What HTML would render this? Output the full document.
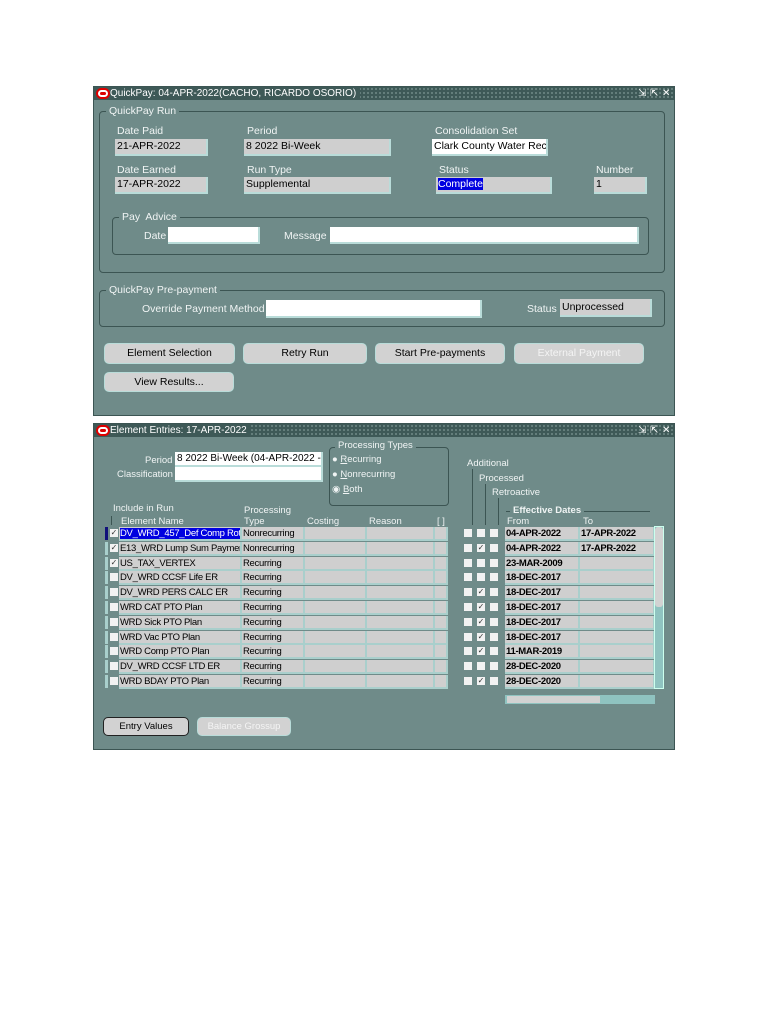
<!DOCTYPE html>
<html><head><meta charset="utf-8"><style>
*{margin:0;padding:0;box-sizing:border-box}
body{width:768px;height:1024px;background:#fff;position:relative;font-family:"Liberation Sans",Arial,sans-serif;overflow:hidden}
.a{position:absolute}
.win{position:absolute;background:#6f8b89;border:1px solid #3c5553}
.tb{position:absolute;left:0;right:0;top:0;height:13px;background:#3e5957;background-image:radial-gradient(#7d9794 0.7px,transparent 1px);background-size:4px 4px;color:#fff;font-size:10px;line-height:13px}
.tb span{background:#3e5957;padding:0 4px 0 2px}
.ol{display:inline-block;width:10px;height:7px;border:2px solid #fff;border-radius:4px;background:#d00;vertical-align:-1px;margin:0 2px 0 2px;box-shadow:0 0 0 2px #d00}
.lbl{position:absolute;font-size:10.5px;color:#f0f4f4;white-space:nowrap}
.f{position:absolute;background:#cfcfcf;border-right:2px solid #b9dcd9;border-bottom:2px solid #b9dcd9;font-size:10.5px;line-height:13px;padding-left:2px;padding-top:1px;white-space:nowrap;overflow:hidden;color:#000}
.w{background:#fff}
.grp{position:absolute;border:1px solid #3c5553;border-radius:4px}
.gl{position:absolute;background:#6f8b89;color:#f0f4f4;font-size:10.5px;padding:0 3px;white-space:nowrap}
.btn{position:absolute;background:#d2d2d2;border:1px solid #b9dcd9;border-radius:5px;font-size:10.5px;text-align:center;line-height:18px;color:#000}
.dis{color:#f4f4f4}
.cb{position:absolute;width:8px;height:8px;background:#f2f2f2;font-size:8px;line-height:8px;text-align:center;color:#333}
.tc{position:absolute;background:#cfcfcf;border-right:2px solid #a9cfcc;border-bottom:2px solid #a9cfcc;font-size:9.5px;line-height:13px;padding-left:1px;white-space:nowrap;overflow:hidden;letter-spacing:-0.3px}
.b{font-weight:bold}
.ic{position:absolute;color:#fff;font-size:10px;line-height:13px;top:0}
</style></head><body>

<div class="win" style="left:93px;top:86px;width:582px;height:330px">
 <div class="tb"><span><i class="ol"></i>QuickPay: 04-APR-2022(CACHO, RICARDO OSORIO)</span></div>
 <div class="ic" style="left:544px">⇲</div><div class="ic" style="left:556px">⇱</div><div class="ic" style="left:568px">✕</div>
 <div class="grp" style="left:5px;top:24px;width:566px;height:162px"></div>
 <div class="gl" style="left:12px;top:18px">QuickPay Run</div>
 <div class="lbl" style="left:23px;top:38px">Date Paid</div>
 <div class="f" style="left:21px;top:52px;width:93px;height:17px">21-APR-2022</div>
 <div class="lbl" style="left:153px;top:38px">Period</div>
 <div class="f" style="left:150px;top:52px;width:147px;height:17px">8 2022 Bi-Week</div>
 <div class="lbl" style="left:341px;top:38px">Consolidation Set</div>
 <div class="f w" style="left:338px;top:52px;width:116px;height:17px">Clark County Water Rec</div>
 <div class="lbl" style="left:23px;top:77px">Date Earned</div>
 <div class="f" style="left:21px;top:90px;width:93px;height:17px">17-APR-2022</div>
 <div class="lbl" style="left:153px;top:77px">Run Type</div>
 <div class="f" style="left:150px;top:90px;width:147px;height:17px">Supplemental</div>
 <div class="lbl" style="left:345px;top:77px">Status</div>
 <div class="f" style="left:342px;top:90px;width:116px;height:17px"><span style="background:#0000e0;color:#fff">Complete</span></div>
 <div class="lbl" style="left:502px;top:77px">Number</div>
 <div class="f" style="left:500px;top:90px;width:53px;height:17px">1</div>
 <div class="grp" style="left:18px;top:130px;width:537px;height:38px"></div>
 <div class="gl" style="left:25px;top:124px">Pay&nbsp; Advice</div>
 <div class="lbl" style="left:50px;top:143px">Date</div>
 <div class="f w" style="left:74px;top:140px;width:92px;height:17px">&nbsp;</div>
 <div class="lbl" style="left:190px;top:143px">Message</div>
 <div class="f w" style="left:236px;top:140px;width:309px;height:17px">&nbsp;</div>
 <div class="grp" style="left:5px;top:203px;width:566px;height:37px"></div>
 <div class="gl" style="left:12px;top:197px">QuickPay Pre-payment</div>
 <div class="lbl" style="left:48px;top:216px">Override Payment Method</div>
 <div class="f w" style="left:172px;top:213px;width:216px;height:18px">&nbsp;</div>
 <div class="lbl" style="left:433px;top:216px">Status</div>
 <div class="f" style="left:466px;top:212px;width:92px;height:18px;line-height:15px">Unprocessed</div>
 <div class="btn" style="left:10px;top:256px;width:131px;height:21px">Element Selection</div>
 <div class="btn" style="left:149px;top:256px;width:124px;height:21px">Retry Run</div>
 <div class="btn" style="left:281px;top:256px;width:130px;height:21px">Start Pre-payments</div>
 <div class="btn dis" style="left:420px;top:256px;width:130px;height:21px">External Payment</div>
 <div class="btn" style="left:10px;top:285px;width:130px;height:20px">View Results...</div>
</div>

<div class="win" style="left:93px;top:423px;width:582px;height:327px">
 <div class="tb"><span><i class="ol"></i>Element Entries: 17-APR-2022</span></div>
 <div class="ic" style="left:544px">⇲</div><div class="ic" style="left:556px">⇱</div><div class="ic" style="left:568px">✕</div>
 <div class="lbl" style="left:51px;top:31px;font-size:9.5px">Period</div>
 <div class="f w" style="left:81px;top:28px;width:148px;height:15px;font-size:10px;padding-top:0">8 2022 Bi-Week (04-APR-2022 - 17-APR</div>
 <div class="lbl" style="left:23px;top:45px;font-size:9.5px">Classification</div>
 <div class="f w" style="left:81px;top:43px;width:148px;height:15px">&nbsp;</div>
 <div class="grp" style="left:235px;top:23px;width:120px;height:59px"></div>
 <div class="gl" style="left:241px;top:16px;font-size:9.5px">Processing Types</div>
 <div class="lbl" style="left:238px;top:30px;font-size:9.5px">● <u>R</u>ecurring</div>
 <div class="lbl" style="left:238px;top:45px;font-size:9.5px">● <u>N</u>onrecurring</div>
 <div class="lbl" style="left:238px;top:60px;font-size:9.5px">◉ <u>B</u>oth</div>
 <div class="lbl" style="left:19px;top:79px;font-size:9.5px">Include in Run</div>
 <div class="a" style="left:17px;top:92px;width:1px;height:9px;background:#3c5553"></div>
 <div class="lbl" style="left:150px;top:81px;font-size:9.5px">Processing</div>
 <div class="lbl" style="left:27px;top:92px;font-size:9.5px">Element Name</div>
 <div class="lbl" style="left:150px;top:92px;font-size:9.5px">Type</div>
 <div class="lbl" style="left:213px;top:92px;font-size:9.5px">Costing</div>
 <div class="lbl" style="left:275px;top:92px;font-size:9.5px">Reason</div>
 <div class="lbl" style="left:343px;top:92px;font-size:9.5px">[ ]</div>
 <div class="lbl" style="left:373px;top:34px;font-size:9.5px">Additional</div>
 <div class="lbl" style="left:385px;top:49px;font-size:9.5px">Processed</div>
 <div class="lbl" style="left:398px;top:63px;font-size:9.5px">Retroactive</div>
 <div class="a" style="left:378px;top:45px;width:1px;height:56px;background:#3c5553"></div>
 <div class="a" style="left:391px;top:60px;width:1px;height:41px;background:#3c5553"></div>
 <div class="a" style="left:404px;top:74px;width:1px;height:27px;background:#3c5553"></div>
 <div class="a" style="left:412px;top:87px;width:144px;height:1px;background:#3c5553"></div>
 <div class="gl b" style="left:416px;top:81px;font-size:9.5px">Effective Dates</div>
 <div class="lbl" style="left:413px;top:92px;font-size:9.5px">From</div>
 <div class="lbl" style="left:489px;top:92px;font-size:9.5px">To</div>
 <div id="rows"></div>
 <div class="a" style="left:560px;top:102px;width:10px;height:163px;background:#8fc3c0;border:1px solid #cfe;"></div>
 <div class="a" style="left:561px;top:103px;width:8px;height:80px;background:#d2d2d2;border-radius:3px"></div>
 <div class="a" style="left:411px;top:271px;width:150px;height:9px;background:#8fc3c0"></div>
 <div class="a" style="left:413px;top:272px;width:93px;height:7px;background:#d2d2d2"></div>
 <div class="btn" style="left:9px;top:293px;width:86px;height:19px;border:1px solid #222;line-height:17px;font-size:9.5px">Entry Values</div>
 <div class="btn dis" style="left:103px;top:293px;width:94px;height:19px;line-height:17px;font-size:9.5px">Balance Grossup</div>
</div>
<script>
var d=[["DV_WRD_457_Def Comp Roth","Nonrecurring",1,0,"04-APR-2022","17-APR-2022"],
["E13_WRD Lump Sum Payment","Nonrecurring",1,1,"04-APR-2022","17-APR-2022"],
["US_TAX_VERTEX","Recurring",1,0,"23-MAR-2009",""],
["DV_WRD CCSF Life ER","Recurring",0,0,"18-DEC-2017",""],
["DV_WRD PERS CALC ER","Recurring",0,1,"18-DEC-2017",""],
["WRD CAT PTO Plan","Recurring",0,1,"18-DEC-2017",""],
["WRD Sick PTO Plan","Recurring",0,1,"18-DEC-2017",""],
["WRD Vac PTO Plan","Recurring",0,1,"18-DEC-2017",""],
["WRD Comp PTO Plan","Recurring",0,1,"11-MAR-2019",""],
["DV_WRD CCSF LTD ER","Recurring",0,0,"28-DEC-2020",""],
["WRD BDAY PTO  Plan","Recurring",0,1,"28-DEC-2020",""]];
var h="";d.forEach(function(r,i){var t=103+i*14.8;
h+='<div class="a" style="left:11px;top:'+t+'px;width:3px;height:13px;background:'+(i==0?'#10107a':'#a9cfcc')+'"></div>';
h+='<div class="cb" style="left:16px;top:'+(t+2)+'px">'+(r[2]?'✓':'')+'</div>';
h+='<div class="tc" style="left:25px;top:'+t+'px;width:123px;height:14px">'+(i==0?'<span style="background:#0000e0;color:#fff">'+r[0]+'</span>':r[0])+'</div>';
h+='<div class="tc" style="left:148px;top:'+t+'px;width:63px;height:14px">'+r[1]+'</div>';
h+='<div class="tc" style="left:211px;top:'+t+'px;width:62px;height:14px"></div>';
h+='<div class="tc" style="left:273px;top:'+t+'px;width:68px;height:14px"></div>';
h+='<div class="tc" style="left:341px;top:'+t+'px;width:13px;height:14px"></div>';
h+='<div class="cb" style="left:370px;top:'+(t+2)+'px"></div>';
h+='<div class="cb" style="left:383px;top:'+(t+2)+'px">'+(r[3]?'✓':'')+'</div>';
h+='<div class="cb" style="left:396px;top:'+(t+2)+'px"></div>';
h+='<div class="tc b" style="left:411px;top:'+t+'px;width:75px;height:14px">'+r[4]+'</div>';
h+='<div class="tc b" style="left:486px;top:'+t+'px;width:75px;height:14px">'+r[5]+'</div>';});
document.getElementById("rows").innerHTML=h;
</script>
</body></html>
